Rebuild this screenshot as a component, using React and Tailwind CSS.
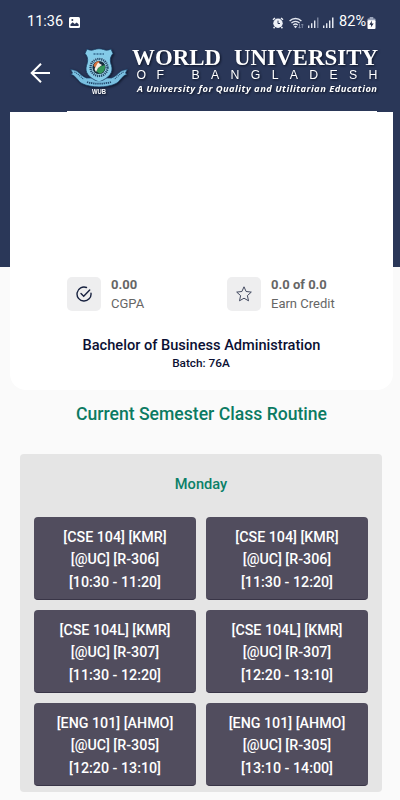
const routine = [
  ['[CSE 104] [KMR]', '[@UC] [R-306]', '[10:30 - 11:20]'],
  ['[CSE 104] [KMR]', '[@UC] [R-306]', '[11:30 - 12:20]'],
  ['[CSE 104L] [KMR]', '[@UC] [R-307]', '[11:30 - 12:20]'],
  ['[CSE 104L] [KMR]', '[@UC] [R-307]', '[12:20 - 13:10]'],
  ['[ENG 101] [AHMO]', '[@UC] [R-305]', '[12:20 - 13:10]'],
  ['[ENG 101] [AHMO]', '[@UC] [R-305]', '[13:10 - 14:00]'],
]

function AlarmIcon() {
  return (
    <svg width="12" height="12" viewBox="0 0 12 12" fill="none">
      <circle cx="6" cy="6.3" r="4.7" fill="#eef1f7" />
      <path d="M1 2.8 3 1M11 2.8 9 1M2.6 10 1.6 11.2M9.4 10l1 1.2" stroke="#eef1f7" strokeWidth="1.5" />
      <path d="M6 3.6v2.9h2" stroke="#2a3656" strokeWidth="1" />
    </svg>
  )
}

function WifiIcon() {
  return (
    <svg width="15" height="12" viewBox="0 0 15 12" fill="none">
      <path d="M.6 4a8.2 8.2 0 0 1 11.8 0M2.4 6.1a5.7 5.7 0 0 1 8.2 0M4.2 8.1a3.3 3.3 0 0 1 4.6 0" stroke="#e3e7f0" strokeWidth="1.3" />
      <path d="m6.5 11.2-1.6-1.7a2.3 2.3 0 0 1 3.2 0z" fill="#e3e7f0" />
      <path d="M10.5 7v4M9.4 10l1.1 1.2L11.6 10M13.3 11V7.2M12.2 8.2l1.1-1.2 1.1 1.2" stroke="#8f99b2" strokeWidth=".8" />
    </svg>
  )
}

function SignalIcon({ full }) {
  return (
    <svg width="11" height="11" viewBox="0 0 11 11">
      <path d="M0 8.5h1.4V11H0zM3 6.2h1.4V11H3zM6 3.6h1.4V11H6z" fill="#e3e7f0" />
      <path d="M9 .5h1.5V11H9z" fill={full ? '#e3e7f0' : '#77819c'} />
    </svg>
  )
}

function StatusBar() {
  return (
    <div className="flex h-11 items-center pl-[27px] pr-[24px] pt-px text-white">
      <span className="text-[14.5px] leading-none">11:36</span>
      <svg className="ml-[6px]" width="11" height="11" viewBox="0 0 11 11">
        <rect width="11" height="11" rx="1.5" fill="#fff" />
        <path d="M1.5 9V7.2l2.2-2 2 1.7 2-1.5L9.6 7.2V9z" fill="#2a3656" />
        <circle cx="3.3" cy="3" r="1" fill="#2a3656" />
      </svg>
      <div className="ml-auto flex items-center">
        <span className="mr-[5px]"><AlarmIcon /></span>
        <WifiIcon />
        <span className="ml-[4px]"><SignalIcon /></span>
        <span className="ml-[4px]"><SignalIcon full /></span>
        <span className="ml-[5px] text-[14.5px] leading-none">82%</span>
        <svg className="ml-[1px]" width="9" height="12" viewBox="0 0 9 12">
          <rect x="2.7" width="3.6" height="2" fill="#9aa4bb" />
          <rect x=".5" y="1.5" width="8" height="3" rx="1" fill="#9aa4bb" />
          <rect x=".5" y="3.2" width="8" height="8.8" rx="1" fill="#fff" />
          <path d="M5 3.6 2.3 7.7h1.9L3.8 10.6 6.7 6.5H4.7z" fill="#1b2440" />
        </svg>
      </div>
    </div>
  )
}

function Crest() {
  return (
    <svg width="58" height="50" viewBox="0 0 58 50" className="drop-shadow-[1px_1px_1px_#10182c]">
      <path d="M.5 21c2.5 1.500 4.500.5 7 2.500 3 2.500 5 5 9 6.500h25c4-1.500 6-4 9-6.500 2.500-2 4.500-1 7-2.500l-2 4 1.500 1.500c-5 1-7 7-11 9-9 4.500-25 4.500-34 0-4-2-6-8-11-9L2.500 25z" fill="#79bfe0" stroke="#1c3d63" strokeWidth=".7" />
      <path d="M4.5 24c5 2.500 7 6.500 11.500 8.500M53.500 24c-5 2.500-7 6.500-11.500 8.500" fill="none" stroke="#21466b" strokeWidth="1.2" strokeDasharray="1 1" />
      <path d="M17 1c3 1.500 5 1.500 7.500.5 3-1 6-1 9 0C36 2.500 38 2.500 41 1l2 4.500c-3.500 4-3 8-1.500 12 2 6.500-1.500 12-12.500 16.500C18 29.500 14.500 24 16.500 17.500c1.500-4 2-8-1.500-12z" fill="#84cbe8" stroke="#1c3d63" strokeWidth=".8" />
      <path d="M23.500 6h2M26.500 6h2M29.500 6h2M32.500 6h1.500" stroke="#356b8f" strokeWidth="1.6" />
      <circle cx="29" cy="19.5" r="10" fill="#a9dcf0" />
      <circle cx="29" cy="19.5" r="8.5" fill="none" stroke="#1f4a6d" strokeWidth="2.4" strokeDasharray="1.3 .7" />
      <circle cx="29" cy="19.5" r="6.6" fill="#172c3d" />
      <path d="M23.500 17.500c1-3 3.500-4.500 6-4.200l-1 5-3 1.700z" fill="#d9713d" />
      <path d="M29 19l5.800-2c.8 4-1 8-5 8.700l-3.500-2.500z" fill="#34965a" />
      <path d="M28 14.500l4 2.500-4 3-2 4-1.500-3z" fill="#f1eee3" />
      <path d="M13 32.500c9 4 23 4 32 0" fill="none" stroke="#79bfe0" strokeWidth="4.5" />
      <path d="M17 34c7.500 2.300 16.500 2.300 24 0" fill="none" stroke="#21466b" strokeWidth="1.8" strokeDasharray="1.3 .8" />
      <text x="22" y="46.3" textLength="14" lengthAdjust="spacingAndGlyphs" fontSize="6.5" fontWeight="700" fill="#fff" className="font-['Liberation_Sans',sans-serif]">WUB</text>
    </svg>
  )
}

function Wordmark() {
  return (
    <svg width="256" height="56" viewBox="0 0 256 56" fill="#fff" className="drop-shadow-[1px_1px_1px_#0c1326]">
      <g className="font-['Liberation_Serif',serif]" fontWeight="700" fontSize="24">
        <text x="1" y="21" textLength="89" lengthAdjust="spacingAndGlyphs">WORLD</text>
        <text x="103" y="21" textLength="144" lengthAdjust="spacingAndGlyphs">UNIVERSITY</text>
      </g>
      <g className="font-['Liberation_Sans',sans-serif]" fontSize="12.3">
        <text x="5.5" y="35" textLength="27.5" lengthAdjust="spacing">OF</text>
        <text x="60.5" y="35" textLength="186" lengthAdjust="spacing">BANGLADESH</text>
      </g>
      <text className="font-['Open_Sans',sans-serif]" x="6" y="48.3" textLength="240" lengthAdjust="spacing" fontSize="9.4" fontWeight="700" fontStyle="italic">A University for Quality and Utilitarian Education</text>
    </svg>
  )
}

function Stat({ value, label, children }) {
  return (
    <div className="flex w-40 items-center">
      <div className="flex h-[34px] w-[34px] items-center justify-center rounded-[5px] bg-[#eeeeef]">{children}</div>
      <div className="ml-[10px] text-[13px] leading-[19px] text-[#666]">
        <div className="font-bold">{value}</div>
        <div>{label}</div>
      </div>
    </div>
  )
}

export default function App() {
  return (
    <div className="h-[800px] w-[400px] overflow-hidden bg-[#fafafa] bg-[linear-gradient(#2a3758_267px,#fafafa_267px)] font-['Roboto',sans-serif]">
      <StatusBar />
      <header className="flex h-[67px] pl-[30px]">
        <svg className="mt-[18px]" width="20" height="22" viewBox="0 0 20 22" fill="none" stroke="#fff" strokeWidth="2">
          <path d="M20 11H2M11 1.8 1.7 11l9.3 9.2" />
        </svg>
        <div className="ml-[20px] mt-[4px] shrink-0"><Crest /></div>
        <div className="ml-[3px] shrink-0"><Wordmark /></div>
      </header>
      <div className="ml-[67px] h-px w-[310px] bg-white" />

      {/* Profile card */}
      <section className="ml-[10px] flex h-[278px] w-[383px] flex-col rounded-b-[16px] bg-white">
        <div className="mt-[162.5px] flex pl-[57px]">
          <Stat value="0.00" label="CGPA">
            <svg width="16" height="16" viewBox="0 0 16 16" fill="none" stroke="#17213f" strokeWidth="1.4" strokeLinecap="round">
              <path d="M15 7.3A7 7 0 1 1 10.5 1.5" />
              <path d="m5 7.5 2.7 2.7 6-6.3" />
            </svg>
          </Stat>
          <Stat value="0.0 of 0.0" label="Earn Credit">
            <svg width="16" height="16" viewBox="0 0 16 16" fill="none" stroke="#303850" strokeWidth=".9" strokeLinejoin="round">
              <path d="m8 .8 2.1 4.7 5.2.6-3.900 3.500 1.100 5.200L8 12.200l-4.500 2.600 1.100-5.200L.7 6.100l5.200-.6z" />
            </svg>
          </Stat>
        </div>
        <div className="mt-[21px] text-center text-[#0b1033]">
          <h2 className="text-[14.6px] font-medium leading-[22px]">Bachelor of Business Administration</h2>
          <p className="pr-px text-[11.8px] font-medium leading-[14px]">Batch: 76A</p>
        </div>
      </section>

      <h1 className="mt-[12px] pl-[3px] text-center text-[17.6px] font-medium leading-[24px] text-[#0b7a62]">Current Semester Class Routine</h1>

      {/* Routine */}
      <section className="ml-[20px] mt-[28px] h-[338px] w-[362px] rounded-[4px] bg-[#e5e5e5] px-[14px] pt-[20px]">
        <h3 className="text-center text-[14.6px] font-medium leading-[20px] text-[#0b8068]">Monday</h3>
        <div className="mt-[23px] grid grid-cols-2 gap-[10px]">
          {routine.map((lines) => (
            <div
              key={lines.join()}
              className="flex h-[83px] flex-col items-center justify-center rounded-[4px] border-b border-[#393547] bg-[#514d5e] pt-[3px] text-[14.25px] font-medium leading-[22.4px] text-white"
            >
              {lines.map((line) => (
                <span key={line}>{line}</span>
              ))}
            </div>
          ))}
        </div>
      </section>
    </div>
  )
}
